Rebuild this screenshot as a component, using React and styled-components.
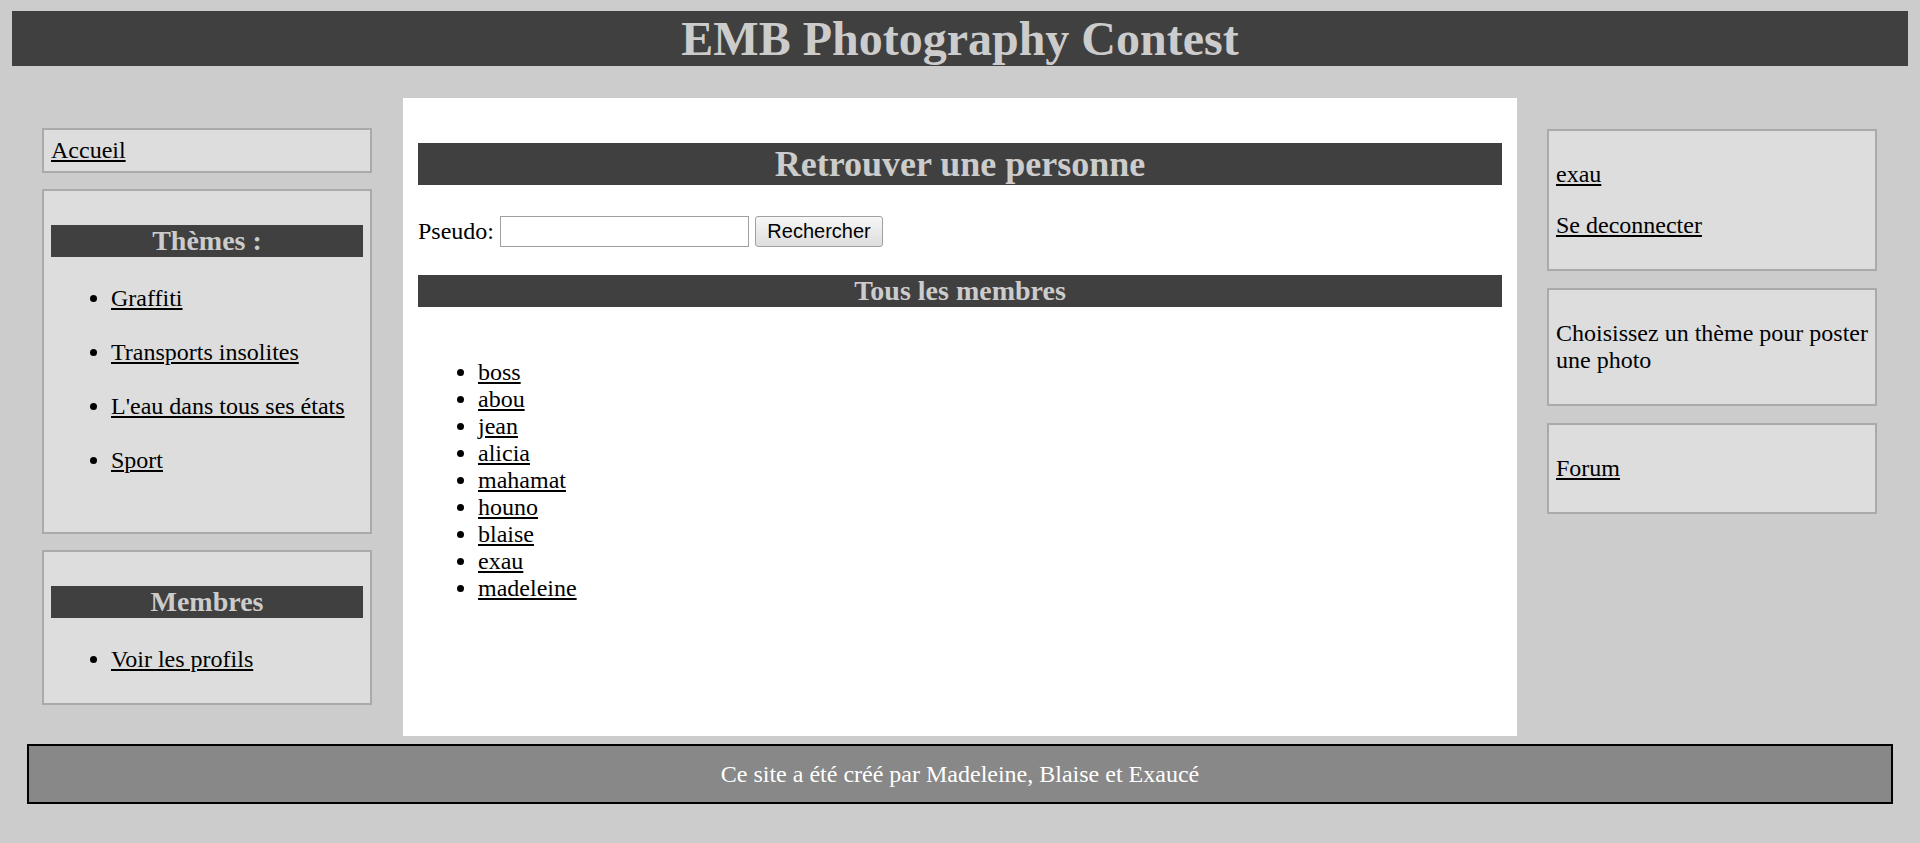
import React from "react";
import styled, { createGlobalStyle } from "styled-components";

const GlobalStyle = createGlobalStyle`
  html {
    background-color: #cccccc;
  }
  body {
    margin: 11px 12px 12px;
    background-color: #cccccc;
    font-family: "Liberation Serif", "Times New Roman", serif;
    font-size: 24px;
    line-height: 27px;
    color: #000;
  }
  a {
    color: #000;
    text-decoration: underline;
  }
`;

const Banner = styled.h1`
  margin: 0;
  background-color: #404040;
  color: #cccccc;
  font-size: 48px;
  line-height: 55px;
  font-weight: bold;
  text-align: center;
`;

const Layout = styled.div`
  display: flex;
  align-items: flex-start;
  padding-left: 30px;
  height: 670px;
`;

const Column = styled.div`
  width: 330px;
  flex-shrink: 0;
  margin-top: ${(p) => p.$top}px;
  display: flex;
  flex-direction: column;
  gap: ${(p) => p.$gap}px;
`;

const Box = styled.div`
  background-color: #dddddd;
  border: 2px solid #aaaaaa;
  padding: ${(p) => p.$padY || 6}px ${(p) => (p.$tight ? 4 : 7)}px
    ${(p) => p.$padY || 6}px 7px;

  p {
    margin: 24px 0;
  }
`;

const BoxTitle = styled.h3`
  margin: 28px 0;
  background-color: #404040;
  color: #cccccc;
  font-size: 28px;
  line-height: 32px;
  font-weight: bold;
  text-align: center;
`;

const LinkList = styled.ul`
  margin: 28px 0 ${(p) => (p.$spaced ? 0 : 24)}px;
  padding: 0 0 ${(p) => (p.$spaced ? 25 : 0)}px 60px;

  li {
    margin-bottom: ${(p) => (p.$spaced ? 27 : 0)}px;
  }
`;

const Main = styled.main`
  box-sizing: border-box;
  width: 1114px;
  height: 638px;
  flex-shrink: 0;
  margin: 32px 30px 0 31px;
  padding: 15px;
  background-color: #ffffff;
`;

const PageTitle = styled.h2`
  margin: 30px 0;
  background-color: #404040;
  color: #cccccc;
  font-size: 36px;
  line-height: 42px;
  font-weight: bold;
  text-align: center;
`;

const SearchRow = styled.form`
  display: flex;
  align-items: center;
  gap: 6px;
  height: 32px;
  margin: 30px 0 28px;
`;

const SearchInput = styled.input`
  box-sizing: border-box;
  width: 249px;
  height: 31px;
  border: 1px solid #a0a0a0;
  padding: 2px 4px;
  font-family: "Liberation Sans", Arial, sans-serif;
  font-size: 20px;
  background: #fff;
  outline: none;
`;

const SearchButton = styled.button`
  box-sizing: border-box;
  width: 128px;
  height: 31px;
  border: 1px solid #a0a0a0;
  border-radius: 3px;
  background: linear-gradient(#f7f7f7, #dddddd);
  font-family: "Liberation Sans", Arial, sans-serif;
  font-size: 20px;
  color: #000;
  padding: 0;
`;

const MemberList = styled.ul`
  margin: 52px 0 24px;
  padding-left: 60px;
`;

const Footer = styled.footer`
  margin: 8px 15px 0;
  border: 2px solid #000;
  background-color: #888888;
  color: #ffffff;
  text-align: center;
  padding: 14.5px 0;
`;

const themes = ["Graffiti", "Transports insolites", "L'eau dans tous ses états", "Sport"];
const members = ["boss", "abou", "jean", "alicia", "mahamat", "houno", "blaise", "exau", "madeleine"];

const App = () => {
  return (
    <>
      <GlobalStyle />
      <Banner>EMB Photography Contest</Banner>
      <Layout>
        <Column $top={62} $gap={16}>
          <Box $padY={7}>
            <a href="#">Accueil</a>
          </Box>
          <Box>
            <BoxTitle>Thèmes :</BoxTitle>
            <LinkList $spaced>
              {themes.map((t) => (
                <li key={t}>
                  <a href="#">{t}</a>
                </li>
              ))}
            </LinkList>
          </Box>
          <Box>
            <BoxTitle>Membres</BoxTitle>
            <LinkList>
              <li>
                <a href="#">Voir les profils</a>
              </li>
            </LinkList>
          </Box>
        </Column>

        <Main>
          <PageTitle>Retrouver une personne</PageTitle>
          <SearchRow onSubmit={(e) => e.preventDefault()}>
            <span>Pseudo:</span>
            <SearchInput type="text" />
            <SearchButton type="submit">Rechercher</SearchButton>
          </SearchRow>
          <BoxTitle>Tous les membres</BoxTitle>
          <MemberList>
            {members.map((m) => (
              <li key={m}>
                <a href="#">{m}</a>
              </li>
            ))}
          </MemberList>
        </Main>

        <Column $top={63} $gap={17}>
          <Box $tight>
            <p>
              <a href="#">exau</a>
            </p>
            <p>
              <a href="#">Se deconnecter</a>
            </p>
          </Box>
          <Box $tight>
            <p>Choisissez un thème pour poster une photo</p>
          </Box>
          <Box $tight>
            <p>
              <a href="#">Forum</a>
            </p>
          </Box>
        </Column>
      </Layout>
      <Footer>Ce site a été créé par Madeleine, Blaise et Exaucé</Footer>
    </>
  );
};

export default App;
